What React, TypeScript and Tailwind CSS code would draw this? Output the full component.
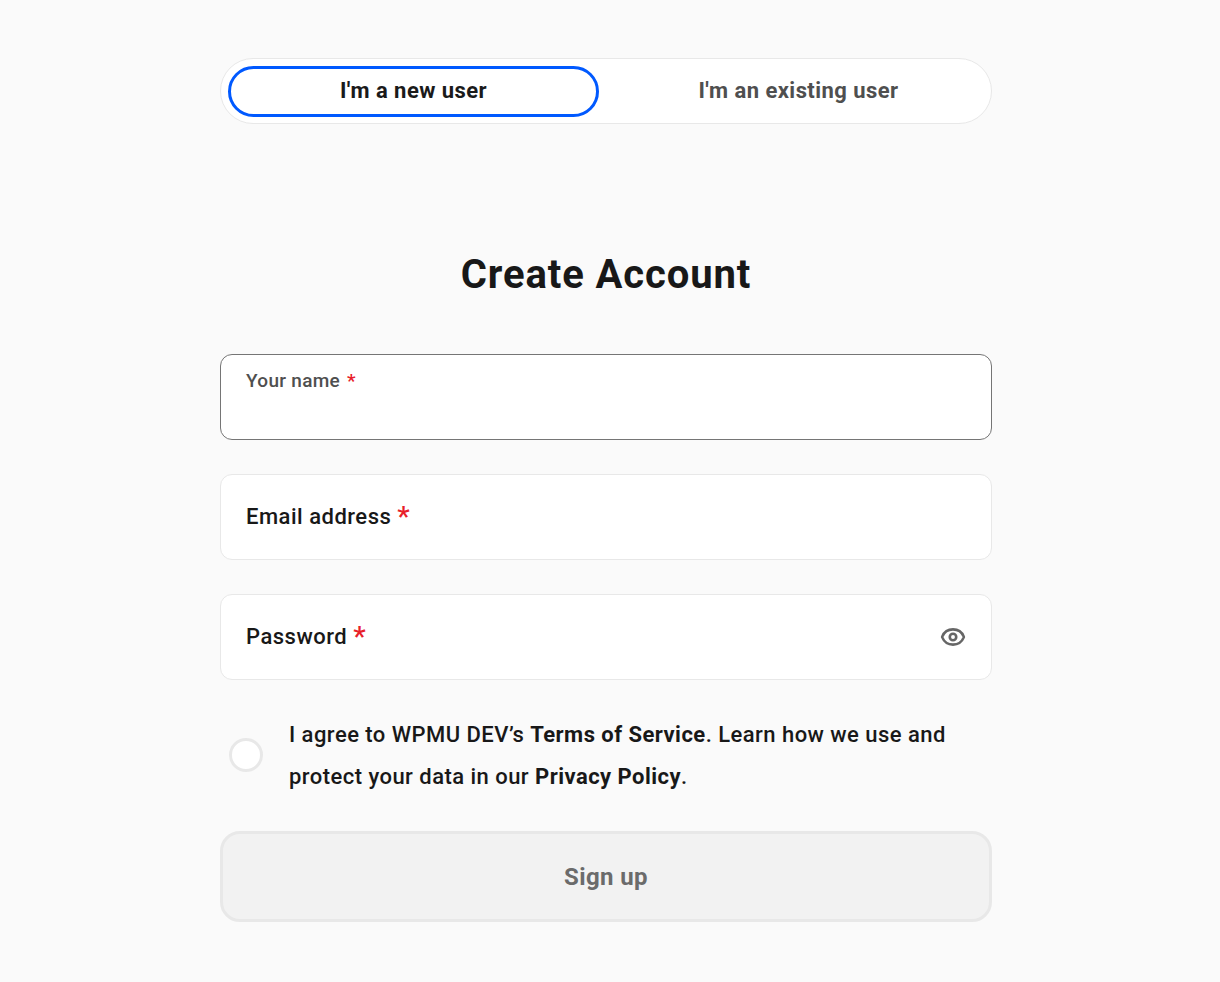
import { Eye } from 'lucide-react';

const Field: React.FC<{ label: string; active?: boolean; children?: React.ReactNode }> = ({ label, active, children }) => {
  return (
    <div
      className={`flex h-[86px] rounded-[12px] border bg-white px-[25px] ${
        active ? 'border-[#757575]' : 'border-[#e8e8e8] items-center justify-between'
      }`}
    >
      {active ? (
        <div className="pt-[14px] text-[19px] leading-[24px] font-medium tracking-[0.3px] text-[#4f4f4f]">
          {label}
          <span className="ml-[7px] font-semibold text-[#e8202a]">*</span>
        </div>
      ) : (
        <div className="flex items-center text-[22px] leading-[30px] font-medium tracking-[0.5px] text-[#181818]">
          {label}
          <span className="ml-[6px] text-[28px] font-medium text-[#e8202a]">*</span>
        </div>
      )}
      {children}
    </div>
  );
};

export default function App() {
  return (
    <div className="min-h-[982px] w-[1212px] bg-[#fafafa] font-['Roboto',sans-serif] shadow-[8px_0_0_#fafafa]">
      <div className="mx-auto flex w-[772px] flex-col pt-[58px]">
        <div className="flex h-[66px] items-start gap-[14px] rounded-full border border-[#e8e8e8] bg-white p-[7px]">
          <button className="h-[51px] w-[371px] rounded-full border-[3px] border-[#0059ff] bg-white pb-[2px] text-[22px] font-bold tracking-[0.44px] text-[#1a1a1a]">
            I'm a new user
          </button>
          <button className="h-[51px] w-[371px] pb-[2px] text-[22px] font-bold tracking-[0.44px] text-[#4f4f4f]">
            I'm an existing user
          </button>
        </div>

        <h1 className="mt-[123px] text-center text-[40px] leading-[56px] font-bold tracking-[0.9px] text-[#181818]">Create Account</h1>

        <div className="mt-[51px] flex flex-col gap-[34px]">
          <Field label="Your name" active />
          <Field label="Email address" />
          <Field label="Password">
            <Eye className="h-[26px] w-[26px] text-[#666666]" strokeWidth={2.4} />
          </Field>
        </div>

        <div className="mt-[33px] flex items-center pl-[9px]">
          <span className="mb-[1px] h-[34px] w-[34px] shrink-0 rounded-full border-[3px] border-[#e8e8e8] bg-white" />
          <p className="ml-[26px] pt-[1px] text-[22px] leading-[42px] font-medium tracking-[0.46px] text-[#181818]">
            I agree to WPMU DEV’s <strong className="font-bold">Terms of Service</strong>. Learn how we use and
            <br />
            protect your data in our <strong className="font-bold">Privacy Policy</strong>.
          </p>
        </div>

        <button className="mt-[33px] h-[91px] rounded-[20px] border-[3px] border-[#e8e8e8] bg-[#f2f2f2] text-[24px] font-bold tracking-[0.4px] text-[#6b6b6b]">
          Sign up
        </button>
      </div>
    </div>
  );
}
